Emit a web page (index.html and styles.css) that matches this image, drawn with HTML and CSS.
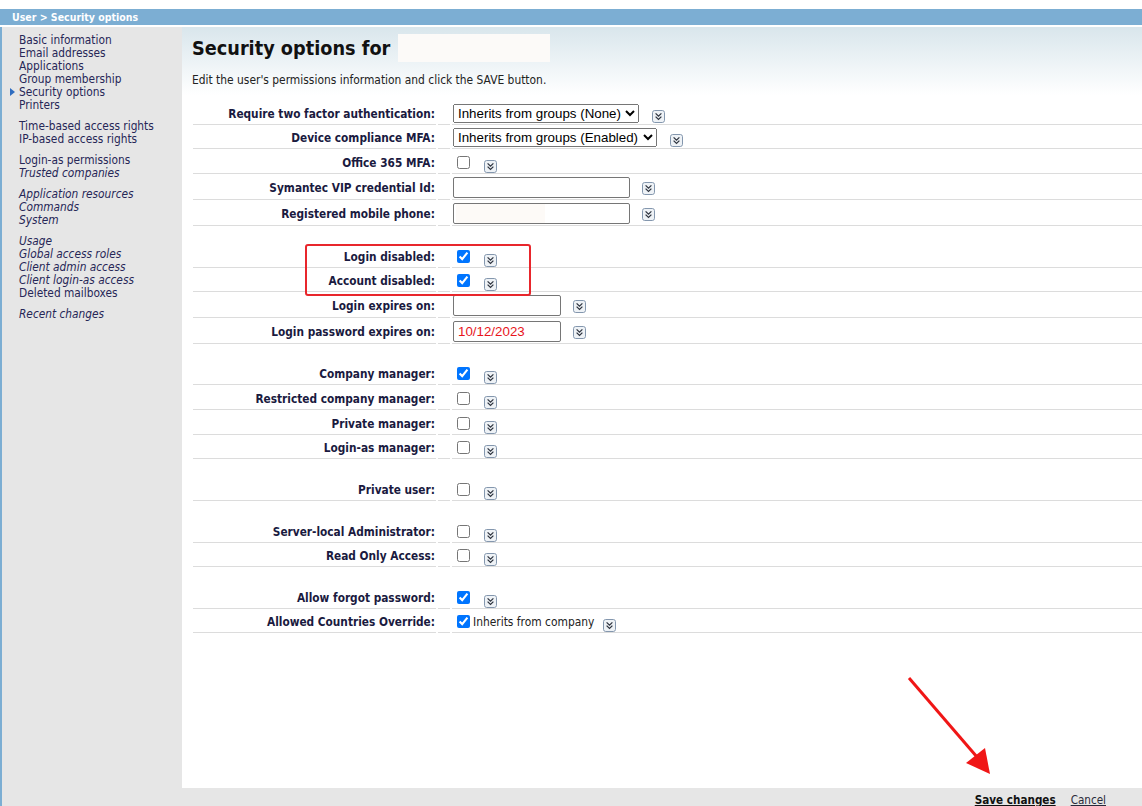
FILE: index.html
```html
<!DOCTYPE html>
<html lang="en">
<head>
<meta charset="utf-8">
<title>User &gt; Security options</title>
<link rel="stylesheet" href="styles.css">
</head>
<body>
<svg class="defs" width="0" height="0" aria-hidden="true">
  <symbol id="exp" viewBox="0 0 13 13">
    <rect x="0.5" y="0.5" width="12" height="12" rx="2.2" fill="#eef2f6" stroke="#8497ae"/>
    <polyline points="3.6,3.4 6.5,6.2 9.4,3.4" fill="none" stroke="#2f3540" stroke-width="1.3"/>
    <polyline points="3.6,6.6 6.5,9.4 9.4,6.6" fill="none" stroke="#2f3540" stroke-width="1.3"/>
  </symbol>
</svg>

<div class="titlebar">User &gt; Security options</div>

<div class="layout">
  <nav class="sidebar">
    <div class="navgroup">
      <a href="#">Basic information</a>
      <a href="#">Email addresses</a>
      <a href="#">Applications</a>
      <a href="#">Group membership</a>
      <a href="#" class="current">Security options</a>
      <a href="#">Printers</a>
    </div>
    <div class="navgroup">
      <a href="#">Time-based access rights</a>
      <a href="#">IP-based access rights</a>
    </div>
    <div class="navgroup">
      <a href="#">Login-as permissions</a>
      <a href="#" class="it">Trusted companies</a>
    </div>
    <div class="navgroup">
      <a href="#" class="it">Application resources</a>
      <a href="#" class="it">Commands</a>
      <a href="#" class="it">System</a>
    </div>
    <div class="navgroup">
      <a href="#" class="it">Usage</a>
      <a href="#" class="it">Global access roles</a>
      <a href="#" class="it">Client admin access</a>
      <a href="#" class="it">Client login-as access</a>
      <a href="#">Deleted mailboxes</a>
    </div>
    <div class="navgroup">
      <a href="#" class="it">Recent changes</a>
    </div>
  </nav>

  <main class="content">
    <div class="head">
      <div class="titlerow">
        <h1>Security options for</h1>
        <span class="namebox"></span>
      </div>
      <p class="intro">Edit the user's permissions information and click the SAVE button.</p>
    </div>

    <div class="form">
      <div class="row">
        <div class="lbl">Require two factor authentication:</div><div></div>
        <div class="val sel"><select class="sel-none"><option>Inherits from groups (None)</option></select><svg class="exp"><use href="#exp"/></svg></div>
      </div>
      <div class="row">
        <div class="lbl">Device compliance MFA:</div><div></div>
        <div class="val sel"><select class="sel-enabled"><option>Inherits from groups (Enabled)</option></select><svg class="exp"><use href="#exp"/></svg></div>
      </div>
      <div class="row h25">
        <div class="lbl">Office 365 MFA:</div><div></div>
        <div class="val chk"><input type="checkbox"><svg class="exp"><use href="#exp"/></svg></div>
      </div>
      <div class="row h26">
        <div class="lbl">Symantec VIP credential Id:</div><div></div>
        <div class="val txtrow"><input type="text" class="txt"><svg class="exp"><use href="#exp"/></svg></div>
      </div>
      <div class="row h26">
        <div class="lbl">Registered mobile phone:</div><div></div>
        <div class="val txtrow"><input type="text" class="txt redacted"><svg class="exp"><use href="#exp"/></svg></div>
      </div>

      <div class="spacer"></div>
      <div class="row">
        <div class="lbl">Login disabled:</div><div></div>
        <div class="val chk"><input type="checkbox" checked><svg class="exp"><use href="#exp"/></svg></div>
      </div>
      <div class="row">
        <div class="lbl">Account disabled:</div><div></div>
        <div class="val chk"><input type="checkbox" checked><svg class="exp"><use href="#exp"/></svg></div>
      </div>
      <div class="row h26">
        <div class="lbl">Login expires on:</div><div></div>
        <div class="val txtrow"><input type="text" class="txt date"><svg class="exp"><use href="#exp"/></svg></div>
      </div>
      <div class="row h26">
        <div class="lbl">Login password expires on:</div><div></div>
        <div class="val txtrow"><input type="text" class="txt date red" value="10/12/2023"><svg class="exp"><use href="#exp"/></svg></div>
      </div>

      <div class="spacer s17"></div>
      <div class="row">
        <div class="lbl">Company manager:</div><div></div>
        <div class="val chk"><input type="checkbox" checked><svg class="exp"><use href="#exp"/></svg></div>
      </div>
      <div class="row h25">
        <div class="lbl">Restricted company manager:</div><div></div>
        <div class="val chk"><input type="checkbox"><svg class="exp"><use href="#exp"/></svg></div>
      </div>
      <div class="row h25">
        <div class="lbl">Private manager:</div><div></div>
        <div class="val chk"><input type="checkbox"><svg class="exp"><use href="#exp"/></svg></div>
      </div>
      <div class="row">
        <div class="lbl">Login-as manager:</div><div></div>
        <div class="val chk"><input type="checkbox"><svg class="exp"><use href="#exp"/></svg></div>
      </div>

      <div class="spacer"></div>
      <div class="row">
        <div class="lbl">Private user:</div><div></div>
        <div class="val chk"><input type="checkbox"><svg class="exp"><use href="#exp"/></svg></div>
      </div>

      <div class="spacer"></div>
      <div class="row">
        <div class="lbl">Server-local Administrator:</div><div></div>
        <div class="val chk"><input type="checkbox"><svg class="exp"><use href="#exp"/></svg></div>
      </div>
      <div class="row">
        <div class="lbl">Read Only Access:</div><div></div>
        <div class="val chk"><input type="checkbox"><svg class="exp"><use href="#exp"/></svg></div>
      </div>

      <div class="spacer"></div>
      <div class="row">
        <div class="lbl">Allow forgot password:</div><div></div>
        <div class="val chk"><input type="checkbox" checked><svg class="exp"><use href="#exp"/></svg></div>
      </div>
      <div class="row">
        <div class="lbl">Allowed Countries Override:</div><div></div>
        <div class="val chk"><input type="checkbox" checked><span class="note">Inherits from company</span><svg class="exp"><use href="#exp"/></svg></div>
      </div>
    </div>
  </main>
</div>

<div class="footer">
  <a href="#" class="save">Save changes</a>
  <a href="#" class="cancel">Cancel</a>
</div>

<svg class="annot" width="1142" height="806" viewBox="0 0 1142 806" aria-hidden="true">
  <rect x="306" y="245" width="224" height="50" rx="2" fill="none" stroke="#e8262c" stroke-width="2"/>
  <line x1="909" y1="678" x2="977" y2="757" stroke="#f01616" stroke-width="3"/>
  <polygon points="990,774 966,763 985,748" fill="#f01616"/>
</svg>
</body>
</html>
```

FILE: styles.css
```css
html, body {
  margin: 0;
  padding: 0;
}

body {
  position: relative;
  width: 1142px;
  height: 806px;
  overflow: hidden;
  background: #fff;
  color: #222;
  font-family: "DejaVu Sans Condensed", "DejaVu Sans", sans-serif;
  font-stretch: condensed;
}

.defs {
  position: absolute;
  width: 0;
  height: 0;
}

.titlebar {
  margin-top: 9px;
  height: 16px;
  line-height: 16px;
  padding-left: 12px;
  background: #7caed3;
  color: #fff;
  font-weight: bold;
  font-size: 10.5px;
}

.layout {
  display: flex;
  margin-top: 2px;
  height: 761px;
  border-left: 2px solid #7caed3;
}

/* Sidebar */
.sidebar {
  flex: none;
  width: 180px;
  box-sizing: border-box;
  padding: 7px 0 0 17px;
  background: #e6e6e6;
}

.navgroup {
  display: flex;
  flex-direction: column;
  margin-bottom: 8px;
}

.navgroup a {
  font-size: 11.8px;
  line-height: 13px;
  color: #272757;
  text-decoration: none;
  white-space: nowrap;
}

.navgroup a.it {
  font-style: italic;
}

.navgroup a.current::before {
  content: "";
  display: inline-block;
  width: 0;
  height: 0;
  margin-left: -9px;
  margin-right: 4px;
  border-left: 5px solid #2f6dc0;
  border-top: 4px solid transparent;
  border-bottom: 4px solid transparent;
}

/* Content */
.content {
  flex: 1;
  background-color: #fff;
  background-image: linear-gradient(#d9e6ec, #ffffff 68px);
  background-repeat: no-repeat;
}

.head {
  padding: 7px 10px 0;
}

.titlerow {
  display: flex;
  align-items: center;
  gap: 8px;
  height: 28px;
}

.titlerow h1 {
  margin: 0;
  font-size: 19.7px;
  font-weight: bold;
  color: #111;
}

.namebox {
  width: 152px;
  height: 28px;
  background: #fcfaf8;
}

.intro {
  margin: 11px 0 0;
  font-size: 11.9px;
  line-height: 14px;
  color: #222;
}

.form {
  margin: 14px 0 0 11px;
}

.row {
  display: grid;
  grid-template-columns: 243px 12px 1fr;
  column-gap: 2px;
  height: 24px;
}

.row.h25 {
  height: 25px;
}

.row.h26 {
  height: 26px;
}

.row > div {
  display: flex;
  align-items: center;
  box-sizing: border-box;
  padding-top: 2px;
  border-bottom: 1px solid #dcdcdc;
}

.row .lbl {
  justify-content: flex-end;
  padding-top: 3px;
  padding-right: 1px;
  font-weight: bold;
  font-size: 11.75px;
  color: #1a1a40;
  white-space: nowrap;
}

.row .val {
  padding-left: 1px;
}

.spacer {
  height: 18px;
}

.spacer.s17 {
  height: 17px;
}

select {
  margin: 0;
  height: 19px;
  font-family: "Liberation Sans", Arial, sans-serif;
  font-size: 13.33px;
  color: #000;
}

.sel-none {
  width: 186px;
}

.sel-enabled {
  width: 204px;
}

.txt {
  box-sizing: border-box;
  margin: 0;
  width: 177px;
  height: 21px;
  padding: 1px 4px;
  border: 1px solid #767676;
  border-radius: 2px;
  font-family: "Liberation Sans", Arial, sans-serif;
  font-size: 13.33px;
  color: #000;
  background: #fff;
}

.txt.redacted {
  background: linear-gradient(to right, #fff 0 2px, #fdfaf7 2px 91px, #fff 91px);
}

.txt.date {
  width: 108px;
}

.txt.red {
  color: #e8141c;
}

input[type="checkbox"] {
  width: 13px;
  height: 13px;
  margin: 3px 3px 3px 4px;
}

.note {
  font-size: 11.9px;
  color: #222;
  white-space: nowrap;
}

.exp {
  flex: none;
  width: 13px;
  height: 13px;
  margin-left: 12px;
}

.chk .exp {
  margin-left: 11px;
  margin-top: 8px;
}

.sel .exp {
  margin-left: 13px;
  margin-top: 6px;
}

.txtrow .exp {
  margin-left: 12px;
  margin-top: 2px;
}

.chk .note + .exp {
  margin-left: 9px;
}

/* Footer */
.footer {
  display: flex;
  justify-content: flex-end;
  gap: 15px;
  height: 24px;
  box-sizing: border-box;
  padding: 5px 36px 0 0;
  background: #e6e6e6;
  border-left: 2px solid #7caed3;
  font-size: 11.6px;
  line-height: 14px;
}

.footer a {
  text-decoration: underline;
}

.footer .save {
  color: #111;
  font-weight: bold;
}

.footer .cancel {
  color: #2a2a3a;
}

/* Screenshot annotations */
.annot {
  position: absolute;
  left: 0;
  top: 0;
  pointer-events: none;
}
```
